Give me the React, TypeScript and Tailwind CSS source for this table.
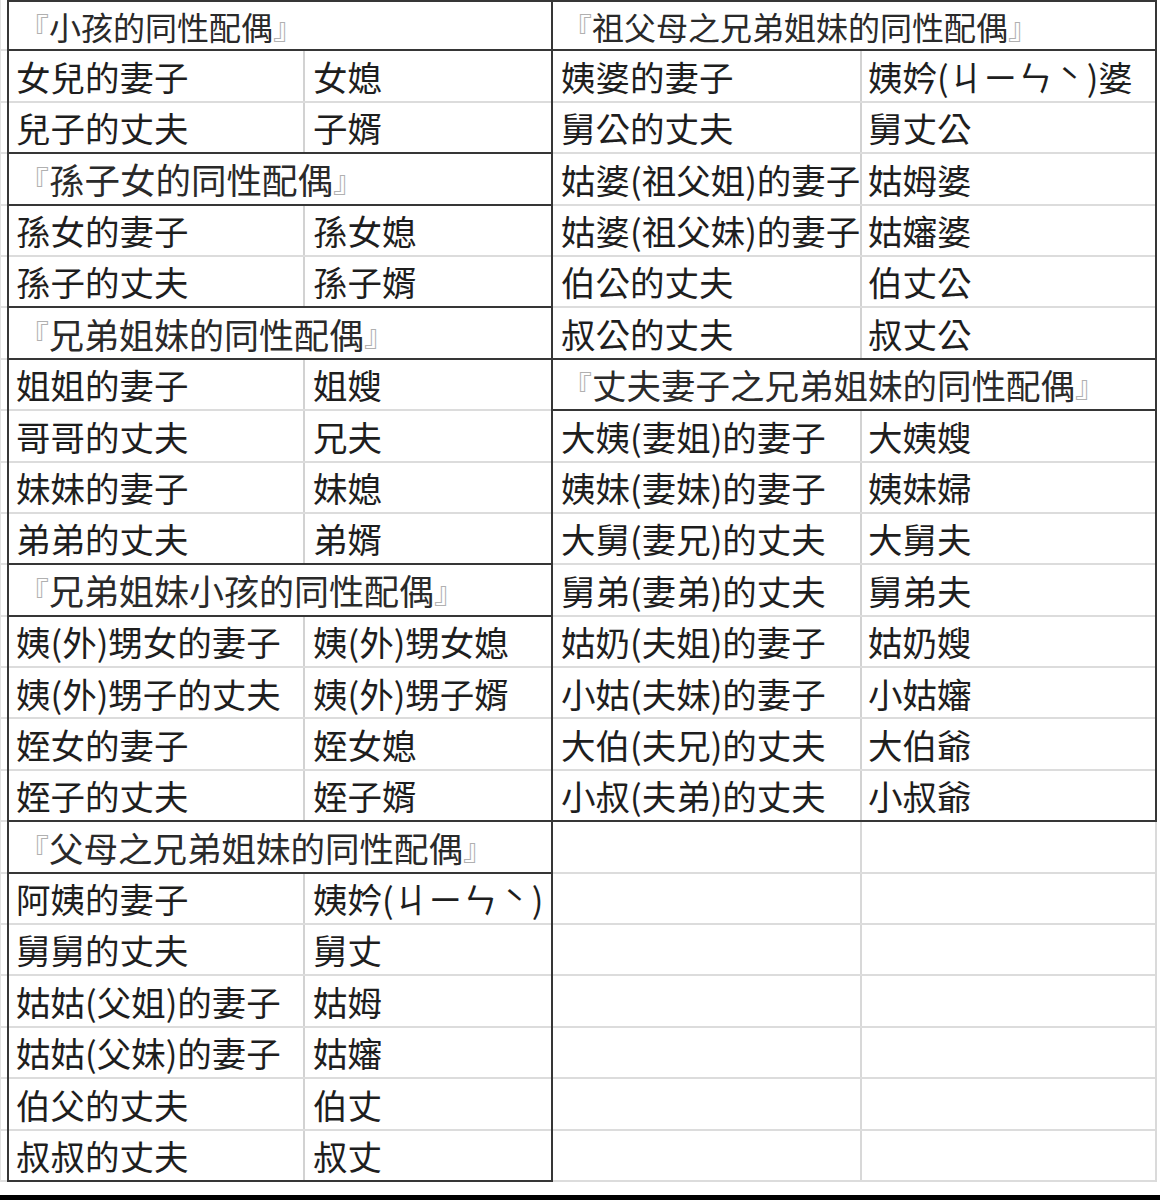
import React from "react";

type Section = { title: string; size: string; rows: [string, string][] };

const LEFT: Section[] = [
  {
    title: "小孩的同性配偶",
    size: "text-[32px]",
    rows: [
      ["女兒的妻子", "女媳"],
      ["兒子的丈夫", "子婿"],
    ],
  },
  {
    title: "孫子女的同性配偶",
    size: "text-[35.5px]",
    rows: [
      ["孫女的妻子", "孫女媳"],
      ["孫子的丈夫", "孫子婿"],
    ],
  },
  {
    title: "兄弟姐妹的同性配偶",
    size: "text-[35px]",
    rows: [
      ["姐姐的妻子", "姐嫂"],
      ["哥哥的丈夫", "兄夫"],
      ["妹妹的妻子", "妹媳"],
      ["弟弟的丈夫", "弟婿"],
    ],
  },
  {
    title: "兄弟姐妹小孩的同性配偶",
    size: "text-[35px]",
    rows: [
      ["姨(外)甥女的妻子", "姨(外)甥女媳"],
      ["姨(外)甥子的丈夫", "姨(外)甥子婿"],
      ["姪女的妻子", "姪女媳"],
      ["姪子的丈夫", "姪子婿"],
    ],
  },
  {
    title: "父母之兄弟姐妹的同性配偶",
    size: "text-[34.5px]",
    rows: [
      ["阿姨的妻子", "姨妗(ㄐㄧㄣˋ)"],
      ["舅舅的丈夫", "舅丈"],
      ["姑姑(父姐)的妻子", "姑姆"],
      ["姑姑(父妹)的妻子", "姑嬸"],
      ["伯父的丈夫", "伯丈"],
      ["叔叔的丈夫", "叔丈"],
    ],
  },
];

const RIGHT: Section[] = [
  {
    title: "祖父母之兄弟姐妹的同性配偶",
    size: "text-[32px]",
    rows: [
      ["姨婆的妻子", "姨妗(ㄐㄧㄣˋ)婆"],
      ["舅公的丈夫", "舅丈公"],
      ["姑婆(祖父姐)的妻子", "姑姆婆"],
      ["姑婆(祖父妹)的妻子", "姑嬸婆"],
      ["伯公的丈夫", "伯丈公"],
      ["叔公的丈夫", "叔丈公"],
    ],
  },
  {
    title: "丈夫妻子之兄弟姐妹的同性配偶",
    size: "text-[34.5px]",
    rows: [
      ["大姨(妻姐)的妻子", "大姨嫂"],
      ["姨妹(妻妹)的妻子", "姨妹婦"],
      ["大舅(妻兄)的丈夫", "大舅夫"],
      ["舅弟(妻弟)的丈夫", "舅弟夫"],
      ["姑奶(夫姐)的妻子", "姑奶嫂"],
      ["小姑(夫妹)的妻子", "小姑嬸"],
      ["大伯(夫兄)的丈夫", "大伯爺"],
      ["小叔(夫弟)的丈夫", "小叔爺"],
    ],
  },
];

const FONT = {
  fontFamily: '"Noto Sans CJK TC", "Noto Sans CJK SC", sans-serif',
};

// 성조 기호(ˋ)는 전각 폭으로 맞춤
const Cell = ({ text }: { text: string }) => {
  const parts = text.split("ˋ");
  return (
    <>
      {parts.map((p, i) => (
        <React.Fragment key={i}>
          {p}
          {i < parts.length - 1 && (
            <span className="inline-block w-[1em] text-center translate-y-[4px]">
              ˋ
            </span>
          )}
        </React.Fragment>
      ))}
    </>
  );
};

// 섹션 하나: 제목 줄 + 데이터 줄
const Block = ({
  section,
  first,
  labelCol,
  labelPad,
  valuePad,
  titlePad,
}: {
  section: Section;
  first: boolean;
  labelCol: string;
  labelPad: string;
  valuePad: string;
  titlePad: string;
}) => (
  <>
    <div
      className={`h-[51.4px] flex items-center border-b-2 border-[#363636] whitespace-nowrap ${
        section.size
      } ${first ? "border-t-2" : ""} ${titlePad}`}
    >
      <span className="text-[#b0b0b0] text-[30px]">『</span>
      <span className="text-[#2a2a2a]">{section.title}</span>
      <span className="text-[#b0b0b0] text-[30px]">』</span>
    </div>
    {section.rows.map(([label, value], i) => {
      const last = i === section.rows.length - 1;
      return (
        <div
          key={label}
          className={`h-[51.4px] grid ${labelCol} ${
            last ? "border-b-2 border-[#363636]" : "border-b-2 border-[#dcdcdc]"
          }`}
        >
          <div className={`flex items-center whitespace-nowrap ${labelPad}`}>
            {label}
          </div>
          <div
            className={`flex items-center whitespace-nowrap border-l-2 border-[#d2d2d2] ${valuePad}`}
          >
            <Cell text={value} />
          </div>
        </div>
      );
    })}
  </>
);

export default function App() {
  return (
    <div
      className="w-[1160px] h-[1200px] bg-white flex flex-col overflow-hidden text-[34.5px] leading-none text-[#1e1e1e]"
      style={FONT}
    >
      <div className="flex">
        {/* 왼쪽 여백 격자 */}
        <div className="w-[7px] flex flex-col border-l border-[#e2e2e2]">
          {Array.from({ length: 23 }, (_, i) => (
            <div key={i} className="h-[51.4px] border-b-2 border-[#e0e0e0]" />
          ))}
        </div>

        {/* 왼쪽 표 */}
        <div className="w-[546px] flex flex-col border-x-2 border-[#363636]">
          {LEFT.map((s, i) => (
            <Block
              key={s.title}
              section={s}
              first={i === 0}
              labelCol="grid-cols-[294px_1fr]"
              labelPad="pl-[7px]"
              valuePad="pl-[8px]"
              titlePad="pl-[10px]"
            />
          ))}
        </div>

        {/* 오른쪽 표 */}
        <div className="w-[604px] flex flex-col">
          <div className="flex flex-col border-r-2 border-[#363636]">
            {RIGHT.map((s, i) => (
              <Block
                key={s.title}
                section={s}
                first={i === 0}
                labelCol="grid-cols-[307px_1fr]"
                labelPad="pl-[8px]"
                valuePad="pl-[6px]"
                titlePad="pl-[9px]"
              />
            ))}
          </div>
          <div className="flex flex-col border-r-2 border-[#dadada]">
            {Array.from({ length: 7 }, (_, i) => (
              <div
                key={i}
                className="h-[51.4px] grid grid-cols-[307px_1fr] border-b-2 border-[#dcdcdc]"
              >
                <div />
                <div className="border-l-2 border-[#d8d8d8]" />
              </div>
            ))}
          </div>
        </div>
      </div>
      <div className="flex-1" />
      <div className="h-[5px] bg-black" />
    </div>
  );
}
